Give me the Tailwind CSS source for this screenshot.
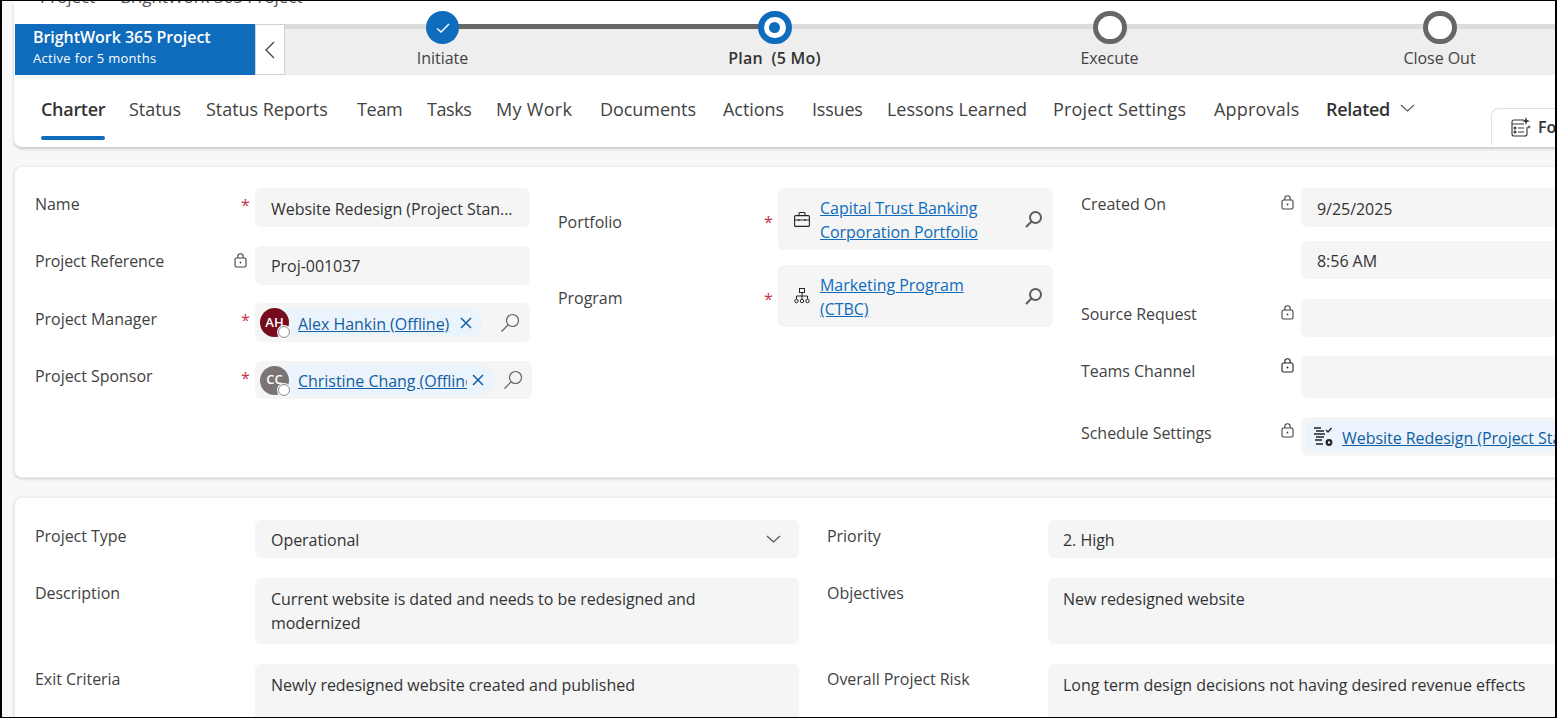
<!DOCTYPE html>
<html lang="en">
<head>
  <meta charset="UTF-8">
  <meta name="viewport" content="width=device-width, initial-scale=1.0">
  <title>Website Redesign - Charter</title>
  <script src="https://cdn.jsdelivr.net/npm/@tailwindcss/browser@4"></script>
</head>
<body class="font-['Open_Sans','Noto_Sans',sans-serif] text-[#424242]">
  <div class="w-[1557px] h-[718px] overflow-hidden bg-[#f8f8f8] border border-black border-l-2 border-r-2 relative text-[16px] tracking-[-0.04px]">

    <!-- Header card -->
    <div class="ml-[12px] w-[1600px] h-[146px] bg-white rounded-bl-lg shadow-[0_2px_3px_rgba(0,0,0,0.2)] relative overflow-hidden">
      <div class="h-[23px] pl-[26px]">
        <div class="-translate-y-[15px] flex gap-[25px] text-[#555] text-[17px] leading-[22px]">
          <span>Project</span>
          <span>BrightWork 365 Project</span>
        </div>
      </div>

      <!-- Stage bar -->
      <div class="flex h-[51px] ml-[1px]">
        <div class="w-[240px] bg-[#0f6cbd] text-white pl-[18px] pt-[2px] shrink-0">
          <div class="font-semibold leading-[22px]">BrightWork 365 Project</div>
          <div class="text-[13px] leading-[20px] tracking-[0.3px]">Active for 5 months</div>
        </div>
        <div class="w-[30px] bg-white border border-[#d1d1d1] flex items-center justify-center shrink-0">
          <svg width="12" height="18" viewBox="0 0 12 18" fill="none" stroke="#424242" stroke-width="1.3"><path d="M10 1 2 9l8 8"/></svg>
        </div>
        <div class="flex-1 bg-[#eeeeee] border-t-[5px] border-[#dcdcdc] relative">
          <div class="absolute left-[157px] w-[333px] h-[5px] -top-[5px] bg-[#666666]"></div>
          <div class="flex -ml-[9px] -mt-[18px] relative">
            <div class="w-[333px] flex flex-col items-center">
              <div class="w-[33px] h-[33px] rounded-full bg-[#0f6cbd] flex items-center justify-center">
                <svg width="16" height="12" viewBox="0 0 16 12" fill="none" stroke="white" stroke-width="1.4"><path d="M2 6.5 6 10l8-8"/></svg>
              </div>
              <div class="mt-[3px] leading-[22px]">Initiate</div>
            </div>
            <div class="w-[331px] flex flex-col items-center">
              <div class="w-[34px] h-[33px] rounded-full border-[6px] border-[#0f6cbd] bg-white flex items-center justify-center">
                <div class="w-[11px] h-[11px] rounded-full bg-[#0f6cbd]"></div>
              </div>
              <div class="mt-[3px] leading-[22px] font-semibold text-[#333] tracking-[0.2px]">Plan&nbsp; (5 Mo)</div>
            </div>
            <div class="w-[339px] flex flex-col items-center">
              <div class="w-[34px] h-[33px] rounded-full border-[5px] border-[#666666] bg-white"></div>
              <div class="mt-[3px] leading-[22px]">Execute</div>
            </div>
            <div class="w-[321px] flex flex-col items-center">
              <div class="w-[34px] h-[33px] rounded-full border-[5px] border-[#666666] bg-white"></div>
              <div class="mt-[3px] leading-[22px]">Close Out</div>
            </div>
          </div>
        </div>
      </div>

      <!-- Tabs -->
      <div class="flex pl-[27px] h-[72px] pt-[20px] text-[18px] leading-[28px] whitespace-nowrap tracking-[-0.05px]">
        <div class="w-[88px] font-semibold text-[#333] relative tracking-[-0.3px]">Charter
          <div class="absolute left-0 top-[41px] w-[64px] h-[4px] rounded-sm bg-[#0f6cbd]"></div>
        </div>
        <div class="w-[77px]">Status</div>
        <div class="w-[151px]">Status Reports</div>
        <div class="w-[70px] tracking-[-0.3px]">Team</div>
        <div class="w-[69px] tracking-[-0.4px]">Tasks</div>
        <div class="w-[104px] tracking-[0.3px]">My Work</div>
        <div class="w-[123px]">Documents</div>
        <div class="w-[89px]">Actions</div>
        <div class="w-[75px] tracking-[-0.2px]">Issues</div>
        <div class="w-[166px]">Lessons Learned</div>
        <div class="w-[161px] tracking-[0.2px]">Project Settings</div>
        <div class="w-[112px] tracking-[0.2px]">Approvals</div>
        <div class="font-semibold text-[#333] flex items-start gap-[10px] tracking-[-0.3px]">Related
          <svg class="mt-[9px]" width="15" height="8" viewBox="0 0 15 8" fill="none" stroke="#555" stroke-width="1.1"><path d="M1 1l6.5 6L14 1"/></svg>
        </div>
      </div>

      <!-- Form fill tab hanging over the header edge -->
      <div class="absolute left-[1477px] top-[107px] w-[120px] h-[37px] border border-b-0 border-[#e0e0e0] rounded-t-lg flex items-center pl-[18px] gap-[7px] font-semibold text-[#333]">
        <svg width="21" height="21" viewBox="0 0 21 21" fill="none" stroke="#333" stroke-width="1.1">
          <path d="M14 3H4a2 2 0 0 0-2 2v12a2 2 0 0 0 2 2h11a2 2 0 0 0 2-2v-7"/><path d="M2 7h12M8 11h6M8 15h6"/><circle cx="5" cy="11" r="1"/><circle cx="5" cy="15" r="1"/>
          <path fill="#333" stroke="none" d="M16 0l1 3 3 1-3 1-1 3-1-3-3-1 3-1zM19 8l.6 1.4 1.4.6-1.4.6-.6 1.4-.6-1.4-1.4-.6 1.4-.6z"/>
        </svg>
        Form
      </div>
    </div>

    <!-- General section -->
    <div class="ml-[12px] mt-[19px] w-[1600px] h-[312px] bg-white border border-[#ededed] rounded-lg shadow-[0_1px_3px_rgba(0,0,0,0.18)] flex pt-[21px]">

      <div class="w-[543px] pl-[20px] shrink-0">
        <div class="flex h-[39px]">
          <div class="w-[206px] pt-[5px] leading-[22px]">Name</div>
          <div class="w-[14px] pt-[6px] text-[#c4314b] leading-[22px]">*</div>
          <div class="w-[275px] h-[39px] bg-[#f5f5f5] rounded-md pl-[16px] leading-[42px] text-[#333] whitespace-nowrap">Website Redesign (Project Stan...</div>
        </div>
        <div class="flex h-[39px] mt-[19px]">
          <div class="w-[199px] pt-[4px] leading-[22px] tracking-[-0.15px]">Project Reference</div>
          <div class="w-[21px] pt-[7px]">
            <svg width="13" height="15" viewBox="0 0 13 15" fill="none" stroke="#424242" stroke-width="1.1"><rect x="1" y="5" width="11" height="9" rx="1.5"/><path d="M3.8 5V3.4a2.7 2.7 0 0 1 5.4 0V5"/><circle cx="6.5" cy="9.5" r=".9" fill="#424242" stroke="none"/></svg>
          </div>
          <div class="w-[275px] h-[39px] bg-[#f5f5f5] rounded-md pl-[16px] leading-[41px] text-[#333]">Proj-001037</div>
        </div>
        <div class="flex h-[39px] mt-[18px]">
          <div class="w-[206px] pt-[5px] leading-[22px]">Project Manager</div>
          <div class="w-[14px] pt-[6px] text-[#c4314b] leading-[22px]">*</div>
          <div class="w-[275px] h-[39px] bg-[#f5f5f5] rounded-md pl-[5px] flex items-center">
            <div class="relative h-[29px] w-[222px] bg-[#ebf3fc] rounded-full flex items-center pl-[38px] shrink-0">
              <div class="absolute left-0 top-0 w-[29px] h-[29px] rounded-full bg-[#750b1c] text-white text-[13px] font-semibold flex items-center justify-center tracking-normal">AH</div>
              <div class="absolute left-[18px] top-[18px] w-[12px] h-[12px] rounded-full bg-white border-[1.5px] border-[#8a8a8a] ring-1 ring-white"></div>
              <a class="text-[#115ea3] underline whitespace-nowrap pt-[2px]">Alex Hankin (Offline)</a>
              <svg class="ml-[11px]" width="12" height="12" viewBox="0 0 12 12" stroke="#115ea3" stroke-width="1.5"><path d="M1 1l10 10M11 1 1 11"/></svg>
            </div>
            <svg class="ml-[18px]" width="20" height="20" viewBox="0 0 20 20" fill="none" stroke="#616161" stroke-width="1.2"><circle cx="12.5" cy="7.5" r="6"/><path d="M8 12 1.5 18.5"/></svg>
          </div>
        </div>
        <div class="flex h-[39px] mt-[19px]">
          <div class="w-[206px] pt-[4px] leading-[22px]">Project Sponsor</div>
          <div class="w-[14px] pt-[6px] text-[#c4314b] leading-[22px]">*</div>
          <div class="w-[277px] h-[38px] bg-[#f5f5f5] rounded-md pl-[5px] flex items-center">
            <div class="relative h-[29px] w-[235px] bg-[#ebf3fc] rounded-full flex items-center pl-[38px] shrink-0">
              <div class="absolute left-0 top-0 w-[29px] h-[29px] rounded-full bg-[#7a7574] text-white text-[13px] font-semibold flex items-center justify-center tracking-normal">CC</div>
              <div class="absolute left-[18px] top-[18px] w-[12px] h-[12px] rounded-full bg-white border-[1.5px] border-[#8a8a8a] ring-1 ring-white"></div>
              <a class="text-[#115ea3] underline whitespace-nowrap w-[169px] overflow-hidden pt-[2px]">Christine Chang (Offline)</a>
              <svg class="ml-[5px]" width="12" height="12" viewBox="0 0 12 12" stroke="#115ea3" stroke-width="1.5"><path d="M1 1l10 10M11 1 1 11"/></svg>
            </div>
            <svg class="ml-[8px]" width="20" height="20" viewBox="0 0 20 20" fill="none" stroke="#616161" stroke-width="1.2"><circle cx="12.5" cy="7.5" r="6"/><path d="M8 12 1.5 18.5"/></svg>
          </div>
        </div>
      </div>

      <div class="w-[523px] shrink-0">
        <div class="flex h-[62px]">
          <div class="w-[206px] pt-[23px] leading-[22px]">Portfolio</div>
          <div class="w-[14px] pt-[23px] text-[#c4314b] leading-[22px]">*</div>
          <div class="w-[275px] h-[62px] bg-[#f5f5f5] rounded-md flex items-center pl-[16px]">
            <svg class="shrink-0" width="16" height="15" viewBox="0 0 16 15" fill="none" stroke="#242424" stroke-width="1.1"><rect x=".6" y="3.6" width="14.8" height="10.8" rx="1"/><path d="M5 3.5V1.5a1 1 0 0 1 1-1h4a1 1 0 0 1 1 1v2M.6 8h14.8M5 7v2M11 7v2"/></svg>
            <a class="ml-[10px] w-[195px] text-[#0f6cbd] underline leading-[24px] pt-[2px]">Capital Trust Banking Corporation Portfolio</a>
            <svg class="ml-[9px] shrink-0" width="19" height="19" viewBox="0 0 19 19" fill="none" stroke="#5c5c5c" stroke-width="2"><circle cx="11.5" cy="7.5" r="5.5"/><path d="M7.5 11.5 2 17"/></svg>
          </div>
        </div>
        <div class="flex h-[62px] mt-[15px]">
          <div class="w-[206px] pt-[22px] leading-[22px]">Program</div>
          <div class="w-[14px] pt-[23px] text-[#c4314b] leading-[22px]">*</div>
          <div class="w-[275px] h-[62px] bg-[#f5f5f5] rounded-md flex items-center pl-[16px]">
            <svg class="shrink-0" width="16" height="16" viewBox="0 0 16 16" fill="none" stroke="#242424"><rect x="5.5" y=".5" width="5" height="4"/><path d="M8 4.5V8M2.5 11V8h11v3M8 8v3"/><circle cx="2.5" cy="13" r="1.7"/><circle cx="8" cy="13" r="1.7"/><circle cx="13.5" cy="13" r="1.7"/></svg>
            <a class="ml-[10px] w-[170px] text-[#0f6cbd] underline leading-[24px] pt-[2px]">Marketing Program (CTBC)</a>
            <svg class="ml-[34px] shrink-0" width="19" height="19" viewBox="0 0 19 19" fill="none" stroke="#5c5c5c" stroke-width="2"><circle cx="11.5" cy="7.5" r="5.5"/><path d="M7.5 11.5 2 17"/></svg>
          </div>
        </div>
      </div>

      <div class="flex-1">
        <div class="flex">
          <div class="w-[200px] pt-[5px] leading-[22px]">Created On</div>
          <div class="w-[20px] pt-[7px]">
            <svg width="13" height="15" viewBox="0 0 13 15" fill="none" stroke="#424242" stroke-width="1.1"><rect x="1" y="5" width="11" height="9" rx="1.5"/><path d="M3.8 5V3.4a2.7 2.7 0 0 1 5.4 0V5"/><circle cx="6.5" cy="9.5" r=".9" fill="#424242" stroke="none"/></svg>
          </div>
          <div class="flex-1 h-[39px] bg-[#f5f5f5] rounded-md pl-[16px] leading-[42px] text-[#333]">9/25/2025</div>
        </div>
        <div class="ml-[220px] mt-[14px] h-[38px] bg-[#f5f5f5] rounded-md pl-[16px] leading-[40px] text-[#333]">8:56 AM</div>
        <div class="flex mt-[20px]">
          <div class="w-[200px] pt-[4px] leading-[22px]">Source Request</div>
          <div class="w-[20px] pt-[6px]">
            <svg width="13" height="15" viewBox="0 0 13 15" fill="none" stroke="#424242" stroke-width="1.1"><rect x="1" y="5" width="11" height="9" rx="1.5"/><path d="M3.8 5V3.4a2.7 2.7 0 0 1 5.4 0V5"/><circle cx="6.5" cy="9.5" r=".9" fill="#424242" stroke="none"/></svg>
          </div>
          <div class="flex-1 h-[38px] bg-[#f5f5f5] rounded-md"></div>
        </div>
        <div class="flex mt-[19px]">
          <div class="w-[200px] pt-[4px] leading-[22px]">Teams Channel</div>
          <div class="w-[20px] pt-[2px]">
            <svg width="13" height="15" viewBox="0 0 13 15" fill="none" stroke="#242424" stroke-width="1.1"><rect x="1" y="5" width="11" height="9" rx="1.5"/><path d="M3.8 5V3.4a2.7 2.7 0 0 1 5.4 0V5"/><circle cx="6.5" cy="9.5" r=".9" fill="#242424" stroke="none"/></svg>
          </div>
          <div class="flex-1 h-[42px] bg-[#f5f5f5] rounded-md"></div>
        </div>
        <div class="flex mt-[19px]">
          <div class="w-[200px] pt-[5px] leading-[22px]">Schedule Settings</div>
          <div class="w-[20px] pt-[6px]">
            <svg width="13" height="15" viewBox="0 0 13 15" fill="none" stroke="#424242" stroke-width="1.1"><rect x="1" y="5" width="11" height="9" rx="1.5"/><path d="M3.8 5V3.4a2.7 2.7 0 0 1 5.4 0V5"/><circle cx="6.5" cy="9.5" r=".9" fill="#424242" stroke="none"/></svg>
          </div>
          <div class="flex-1 h-[39px] bg-[#f5f5f5] rounded-md pl-[5px] pt-[5px]">
            <div class="h-[29px] bg-[#ebf3fc] rounded-md flex items-center pl-[7px]">
              <svg class="shrink-0" width="20" height="21" viewBox="0 0 20 21" fill="none" stroke="#242424" stroke-width="1.3"><path d="M1 2h7M3 5h8M1 8h11M3 11h8M2 14h7M3 18h7M13 4l2 2 3.5-4"/><circle cx="16" cy="16.5" r="2.3" stroke-width="2.2"/></svg>
              <a class="ml-[9px] text-[#115ea3] underline whitespace-nowrap pt-[2px]">Website Redesign (Project Standard)</a>
            </div>
          </div>
        </div>
      </div>
    </div>

    <!-- Details section -->
    <div class="ml-[12px] mt-[19px] w-[1600px] h-[300px] bg-white border border-[#ededed] rounded-lg shadow-[0_1px_3px_rgba(0,0,0,0.18)] pl-[20px] pt-[22px]">
      <div class="flex">
        <div class="w-[220px] pt-[5px] leading-[22px]">Project Type</div>
        <div class="w-[544px] h-[38px] bg-[#f5f5f5] rounded-md pl-[16px] pr-[18px] text-[#333] flex justify-between items-center">
          <span class="pt-[2px]">Operational</span>
          <svg width="15" height="8" viewBox="0 0 15 8" fill="none" stroke="#555" stroke-width="1.2"><path d="M1 1l6.5 6L14 1"/></svg>
        </div>
        <div class="w-[221px] ml-[28px] pt-[5px] leading-[22px]">Priority</div>
        <div class="flex-1 h-[38px] bg-[#f5f5f5] rounded-md pl-[15px] leading-[40px] text-[#333]">2. High</div>
      </div>
      <div class="flex mt-[20px]">
        <div class="w-[220px] pt-[4px] leading-[22px]">Description</div>
        <div class="w-[544px] h-[66px] bg-[#f5f5f5] rounded-md pl-[16px] pr-[40px] pt-[9px] leading-[24px] text-[#333]">Current website is dated and needs to be redesigned and modernized</div>
        <div class="w-[221px] ml-[28px] pt-[4px] leading-[22px]">Objectives</div>
        <div class="flex-1 h-[66px] bg-[#f5f5f5] rounded-md pl-[15px] pt-[9px] leading-[24px] text-[#333]">New redesigned website</div>
      </div>
      <div class="flex mt-[20px]">
        <div class="w-[220px] pt-[4px] leading-[22px]">Exit Criteria</div>
        <div class="w-[544px] h-[66px] bg-[#f5f5f5] rounded-md pl-[16px] pt-[9px] leading-[24px] text-[#333]">Newly redesigned website created and published</div>
        <div class="w-[221px] ml-[28px] pt-[4px] leading-[22px]">Overall Project Risk</div>
        <div class="flex-1 h-[66px] bg-[#f5f5f5] rounded-md pl-[15px] pt-[9px] leading-[24px] text-[#333]">Long term design decisions not having desired revenue effects</div>
      </div>
    </div>
  </div>
</body>
</html>
